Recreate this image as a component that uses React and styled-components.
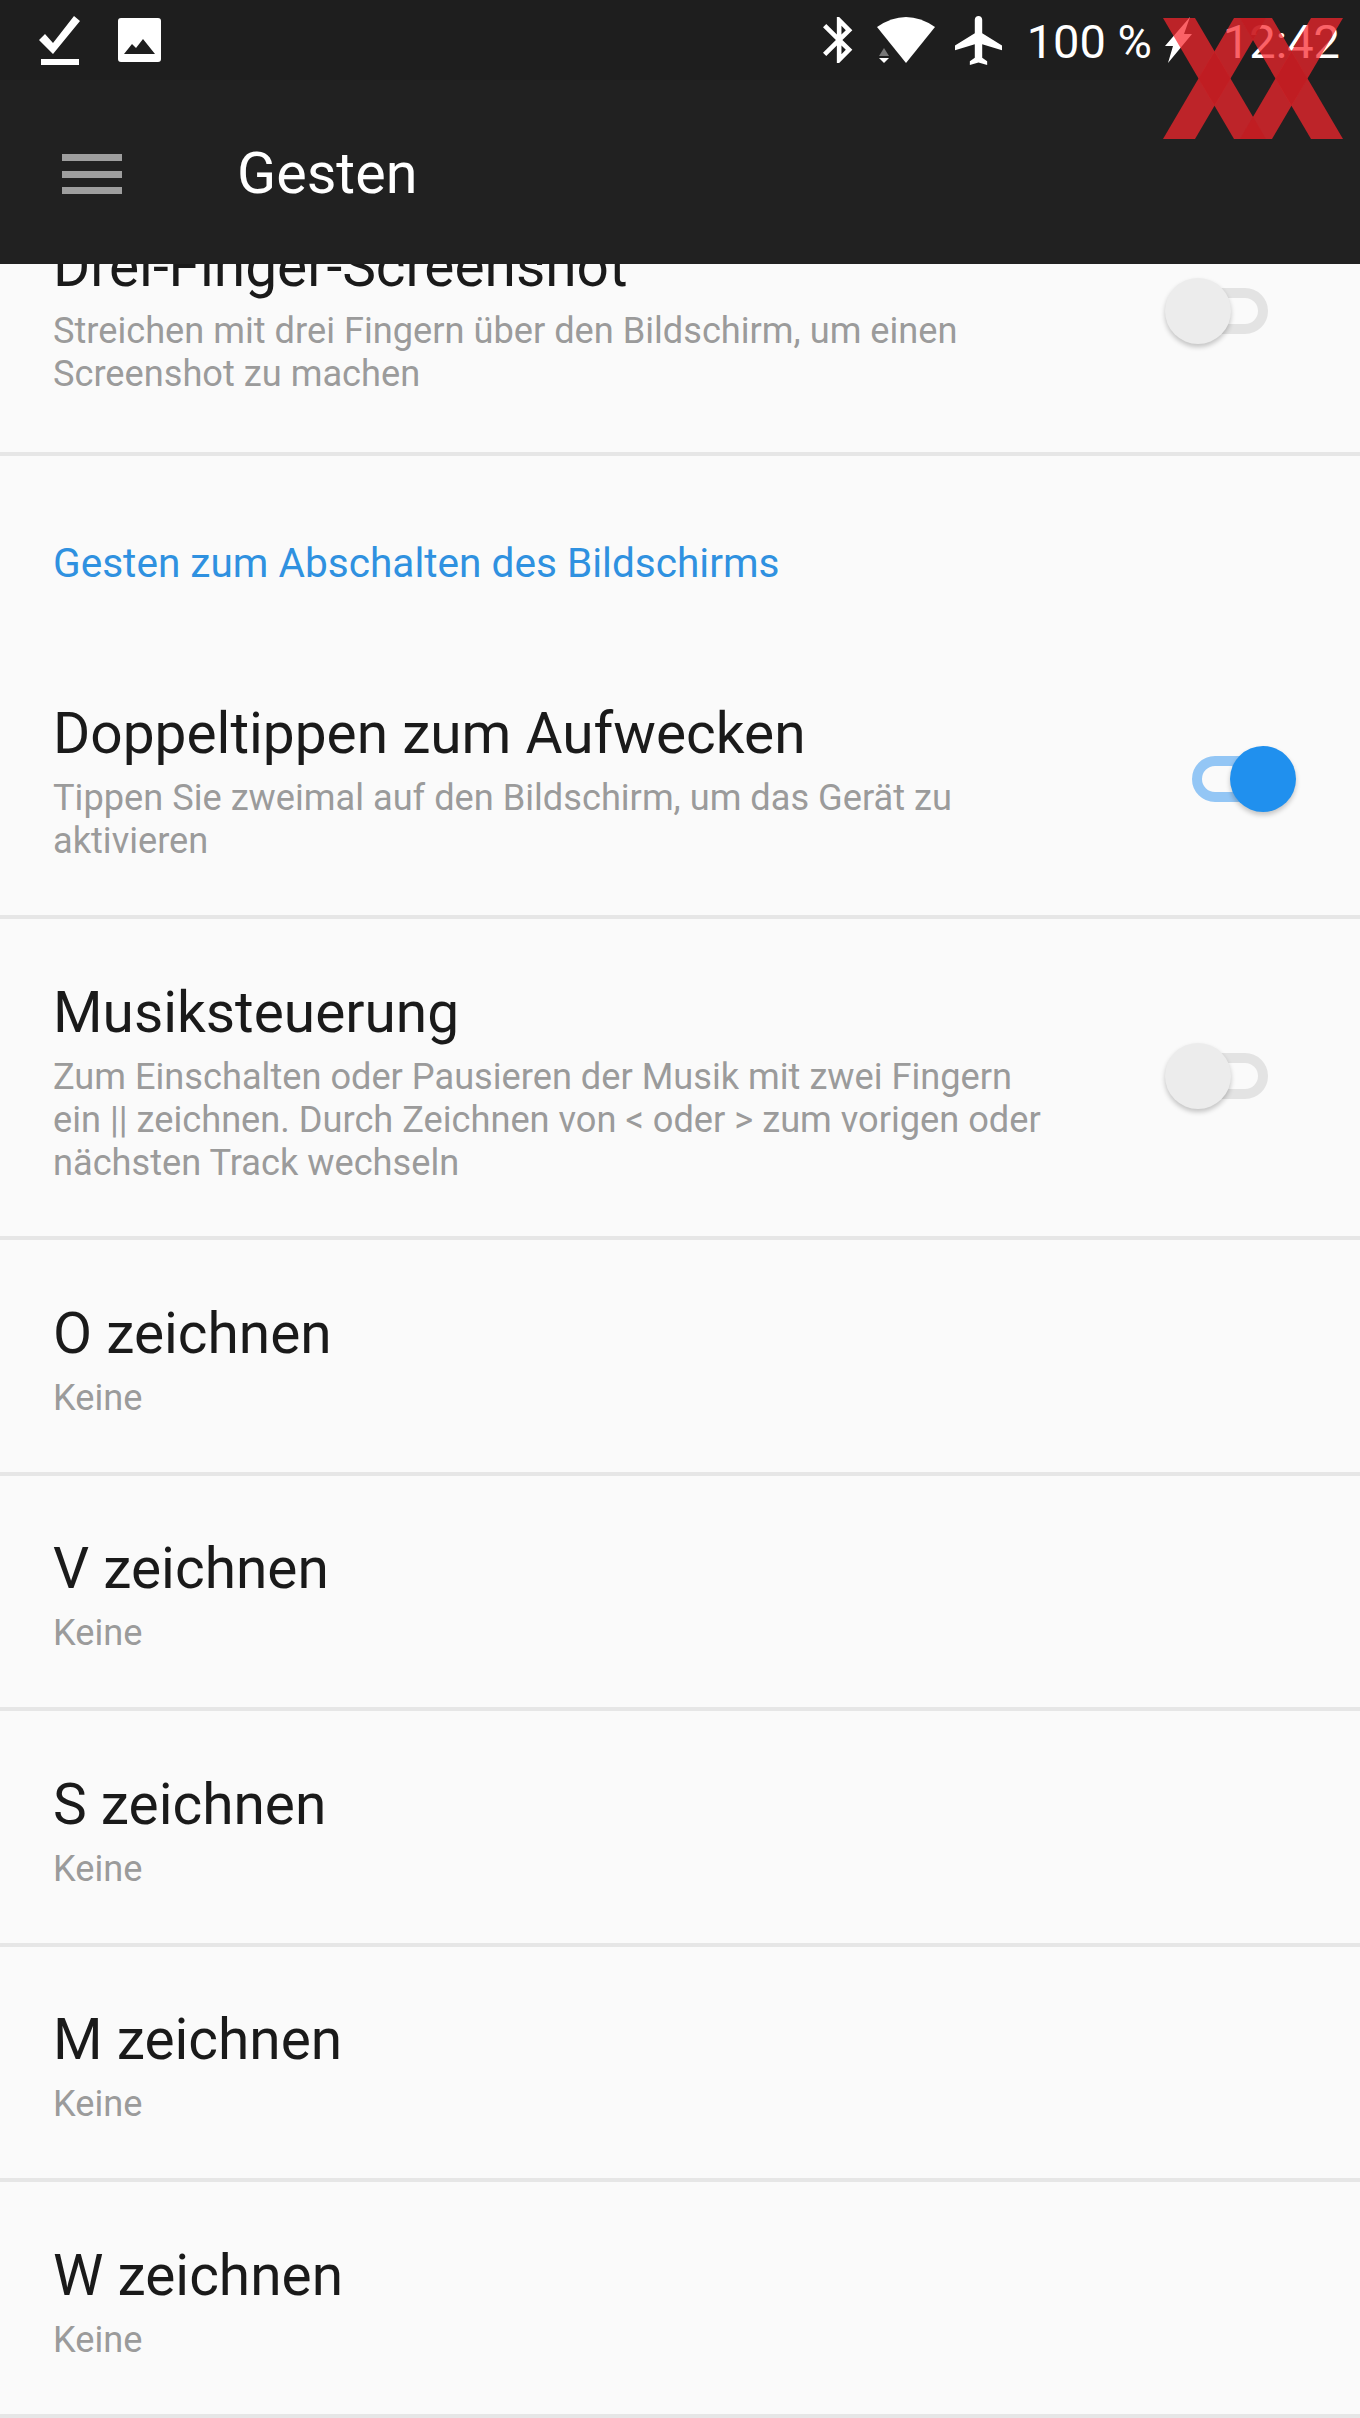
import React from 'react'
import styled, { createGlobalStyle } from 'styled-components'

const GlobalStyle = createGlobalStyle`
  html, body {
    margin: 0;
    padding: 0;
    background: #fafafa;
  }
  * {
    box-sizing: border-box;
  }
`

const Page = styled.div`
  width: 1360px;
  height: 2418px;
  overflow: hidden;
  position: relative;
  background: #fafafa;
  font-family: Roboto, "Liberation Sans", sans-serif;
`

const Header = styled.header`
  position: relative;
  z-index: 2;
  background: #212121;
  height: 264px;
`

const StatusBar = styled.div`
  height: 80px;
  background: #1e1e1e;
  display: flex;
  align-items: center;
  padding: 0 20px 0 39px;
  color: #fff;
`

const StatusLeft = styled.div`
  display: flex;
  align-items: center;
  gap: 38px;
  flex: 1;
`

const StatusRight = styled.div`
  display: flex;
  align-items: center;
`

const Icon = styled.svg`
  display: block;
  fill: #fff;
  flex: none;
  margin-left: ${(p) => p.$ml || 0}px;
`

const StatusText = styled.span`
  font-size: 47px;
  line-height: 80px;
  padding-top: 4px;
  margin-left: ${(p) => p.$ml || 0}px;
  white-space: nowrap;
`

const Toolbar = styled.div`
  height: 184px;
  display: flex;
  align-items: center;
  padding: 0 0 0 62px;
  color: #fff;
`

const MenuButton = styled.div`
  width: 60px;
  height: 40px;
  display: flex;
  flex-direction: column;
  justify-content: space-between;
  margin-right: 115px;
  margin-top: 4px;
`

const MenuBar = styled.span`
  display: block;
  height: 7px;
  background: #9e9e9e;
`

const Title = styled.h1`
  margin: 0;
  font-size: 57.5px;
  font-weight: 400;
  line-height: 64px;
  margin-top: 4px;
`

const Watermark = styled.svg`
  position: absolute;
  left: 1163px;
  top: 18px;
  width: 180px;
  height: 121px;
  z-index: 3;
`

const List = styled.div`
  display: flex;
  flex-direction: column;
`

const Row = styled.div`
  display: flex;
  align-items: center;
  padding: ${(p) => p.$pt}px ${(p) => (p.$hasToggle ? 92 : 53)}px ${(p) => p.$pb}px 53px;
  border-bottom: 4px solid #e6e6e6;
  margin-top: ${(p) => (p.$clipped ? '-92px' : '0')};
`

const RowText = styled.div`
  flex: 1;
  min-width: 0;
  max-width: 1004px;
`

const RowTitle = styled.div`
  font-size: 56.8px;
  line-height: 70px;
  color: #1a1a1a;
`

const RowSub = styled.div`
  font-size: 36.2px;
  line-height: 43px;
  color: #9b9b9b;
  margin-top: 7px;
`

const SectionTitle = styled.div`
  font-size: 40.6px;
  line-height: 46px;
  color: #2f91e0;
  padding: 84px 53px 53px;
`

const ToggleTrack = styled.div`
  position: relative;
  margin-left: auto;
  margin-bottom: ${(p) => p.$lift || 0}px;
  width: 76px;
  height: 46px;
  flex: none;
  border-radius: 23px;
  border: 10px solid ${(p) => (p.$on ? '#93c6f5' : '#e3e3e3')};
`

const ToggleThumb = styled.span`
  position: absolute;
  top: -20px;
  ${(p) => (p.$on ? 'right: -38px;' : 'left: -37px;')}
  width: 66px;
  height: 66px;
  border-radius: 50%;
  background: ${(p) => (p.$on ? '#2090ee' : '#ececec')};
  box-shadow: 0 3px 5px rgba(0, 0, 0, 0.22);
`

const Toggle = ({ on, lift }) => (
  <ToggleTrack $on={on} $lift={lift}>
    <ToggleThumb $on={on} />
  </ToggleTrack>
)

const SettingRow = ({ title, sub, toggle, on, clipped, pt = 58.5, pb = 53, lift }) => (
  <Row $hasToggle={toggle} $clipped={clipped} $pt={pt} $pb={pb}>
    <RowText>
      <RowTitle>{title}</RowTitle>
      <RowSub>{sub}</RowSub>
    </RowText>
    {toggle && <Toggle on={on} lift={lift} />}
  </Row>
)

const gestures = ['O zeichnen', 'V zeichnen', 'S zeichnen', 'M zeichnen', 'W zeichnen']

const App = () => {
  return (
    <Page>
      <GlobalStyle />
      <Header>
        <StatusBar>
          <StatusLeft>
            <Icon width="41" height="49" viewBox="0 0 41 49">
              <path d="M0 24 L6 18 L14 27 L35 0 L41 5 L14 38 Z" />
              <rect x="2" y="43" width="38" height="6" />
            </Icon>
            <Icon width="43" height="44" viewBox="0 0 43 44">
              <rect width="43" height="44" rx="3" />
              <path d="M6 36 L14 26 L18 30 L25 21 L37 36 Z" fill="#1e1e1e" />
            </Icon>
          </StatusLeft>
          <StatusRight>
            <Icon width="30" height="46" viewBox="5 2 13 20" preserveAspectRatio="none">
              <path d="M17.71 7.71L12 2h-1v7.59L6.41 5 5 6.41 10.59 12 5 17.59 6.41 19 11 14.41V22h1l5.71-5.71-4.3-4.29 4.3-4.29zM13 5.83l1.88 1.88L13 9.59V5.83zm1.88 10.46L13 18.17v-3.76l1.88 1.88z" />
            </Icon>
            <Icon $ml={24} width="58" height="46" viewBox="0 0 58 46">
              <path d="M0 10 Q29 -10 58 10 L29 46 Z" />
              <path d="M2 39 L7 31 L12 39 Z" fill="#777" />
              <path d="M2 41 H12 L7 46 Z" />
            </Icon>
            <Icon $ml={20} width="47" height="49" viewBox="2 2 19 20" preserveAspectRatio="none">
              <path d="M21 16v-2l-8-5V3.5c0-.83-.67-1.5-1.5-1.5S10 2.67 10 3.5V9l-8 5v2l8-2.5V19l-2 1.5V22l3.5-1 3.5 1v-1.5L13 19v-5.5l8 2.5z" />
            </Icon>
            <StatusText $ml={25}>100 %</StatusText>
            <Icon $ml={13} width="27" height="46" viewBox="0 0 27 46">
              <path d="M25 0 L19 17 L27 17 L3 46 L8 29 L0 29 Z" />
            </Icon>
            <StatusText $ml={31}>12:42</StatusText>
          </StatusRight>
        </StatusBar>
        <Toolbar>
          <MenuButton>
            <MenuBar />
            <MenuBar />
            <MenuBar />
          </MenuButton>
          <Title>Gesten</Title>
        </Toolbar>
        <Watermark viewBox="0 0 180 121">
          <g fill="rgba(250, 38, 44, 0.72)">
            <path d="M0 0 H32 L103 121 H71 Z" />
            <path d="M71 0 H103 L32 121 H0 Z" />
            <path d="M77 0 H109 L180 121 H148 Z" />
            <path d="M148 0 H180 L109 121 H77 Z" />
          </g>
          <g fill="rgba(30, 0, 0, 0.2)">
            <path d="M51.5 33.5 L67.5 60.5 L51.5 87.5 L35.5 60.5 Z" />
            <path d="M128.5 33.5 L144.5 60.5 L128.5 87.5 L112.5 60.5 Z" />
            <path d="M90 98.8 L103 121 H77 Z" />
            <path d="M77 0 H103 L90 22 Z" />
          </g>
        </Watermark>
      </Header>
      <List>
        <SettingRow
          clipped
          toggle
          pt={60}
          pb={57}
          lift={6}
          title="Drei-Finger-Screenshot"
          sub="Streichen mit drei Fingern über den Bildschirm, um einen Screenshot zu machen"
        />
        <SectionTitle>Gesten zum Abschalten des Bildschirms</SectionTitle>
        <SettingRow
          toggle
          on
          pt={60}
          pb={53}
          lift={4}
          title="Doppeltippen zum Aufwecken"
          sub="Tippen Sie zweimal auf den Bildschirm, um das Gerät zu aktivieren"
        />
        <SettingRow
          toggle
          pb={52.5}
          lift={9}
          title="Musiksteuerung"
          sub="Zum Einschalten oder Pausieren der Musik mit zwei Fingern ein || zeichnen. Durch Zeichnen von < oder > zum vorigen oder nächsten Track wechseln"
        />
        {gestures.map((g) => (
          <SettingRow key={g} title={g} sub="Keine" />
        ))}
      </List>
    </Page>
  )
}

export default App
